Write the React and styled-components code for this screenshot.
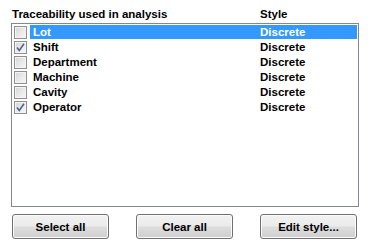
import React from "react";
import styled, { createGlobalStyle } from "styled-components";

const Global = createGlobalStyle`
  html, body { margin: 0; padding: 0; background: #ffffff; }
  body { font-family: "Liberation Sans", Arial, sans-serif; }
`;

const Panel = styled.div`
  width: 376px;
  height: 241px;
  box-sizing: border-box;
  padding: 7px 0 0 11px;
  display: flex;
  flex-direction: column;
  font-family: "Liberation Sans", Arial, sans-serif;
  font-weight: bold;
  font-size: 11.5px;
  color: #000;
`;

const HeaderRow = styled.div`
  display: flex;
  height: 16px;
  line-height: 14px;
`;

const HeaderCell = styled.div`
  width: ${(p) => p.$w}px;
  padding-left: 1px;
  white-space: nowrap;
`;

const List = styled.div`
  width: 348px;
  height: 184px;
  box-sizing: border-box;
  border: 1px solid #828790;
  padding-top: 0px;
  display: flex;
  flex-direction: column;
`;

const Row = styled.div`
  display: flex;
  align-items: center;
  height: 15px;
`;

const Box = styled.div`
  width: 13px;
  height: 13px;
  box-sizing: border-box;
  margin: 1px 3px 0 2px;
  border: 1px solid #8f8f8f;
  background: linear-gradient(135deg, #d4d4d4 0%, #e8e8e8 50%, #f7f7f7 100%);
  box-shadow: inset 0 0 0 1px #f4f4f4;
  display: flex;
  align-items: center;
  justify-content: center;
`;

const Item = styled.div`
  flex: 1;
  display: flex;
  height: 14px;
  margin-top: 1px;
  margin-right: 1px;
  line-height: 14px;
  background: ${(p) => (p.$sel ? "#3399ff" : "transparent")};
  color: ${(p) => (p.$sel ? "#ffffff" : "#000000")};
`;

const Name = styled.div`
  width: 227px;
  padding-left: 3px;
  white-space: nowrap;
`;

const Kind = styled.div`
  white-space: nowrap;
`;

const Buttons = styled.div`
  display: flex;
  gap: 27px;
  margin-top: 7px;
  padding-left: 1px;
`;

const Button = styled.button`
  width: 97px;
  height: 25px;
  box-sizing: border-box;
  border: 1px solid #707070;
  border-radius: 3px;
  background: linear-gradient(#f2f2f2 0%, #ebebeb 48%, #dddddd 52%, #cfcfcf 100%);
  box-shadow: inset 0 0 0 1px #fcfcfc;
  font-family: "Liberation Sans", Arial, sans-serif;
  font-weight: bold;
  font-size: 11.5px;
  color: #000;
  padding: 0;
  line-height: 22px;
`;

const Check = () => (
  <svg width="9" height="9" viewBox="0 0 9 9">
    <path d="M1 4.5 L3.3 7.5 L8 0.8" fill="none" stroke="#4a5f8a" strokeWidth="1.5" />
  </svg>
);

const items = [
  { name: "Lot", checked: false, sel: true },
  { name: "Shift", checked: true },
  { name: "Department", checked: false },
  { name: "Machine", checked: false },
  { name: "Cavity", checked: false },
  { name: "Operator", checked: true },
];

export default function App() {
  return (
    <>
      <Global />
      <Panel>
        <HeaderRow>
          <HeaderCell $w={247}>Traceability used in analysis</HeaderCell>
          <HeaderCell $w={80}>Style</HeaderCell>
        </HeaderRow>
        <List>
          {items.map((it) => (
            <Row key={it.name}>
              <Box>{it.checked && <Check />}</Box>
              <Item $sel={it.sel}>
                <Name>{it.name}</Name>
                <Kind>Discrete</Kind>
              </Item>
            </Row>
          ))}
        </List>
        <Buttons>
          <Button>Select all</Button>
          <Button>Clear all</Button>
          <Button>Edit style...</Button>
        </Buttons>
      </Panel>
    </>
  );
}
